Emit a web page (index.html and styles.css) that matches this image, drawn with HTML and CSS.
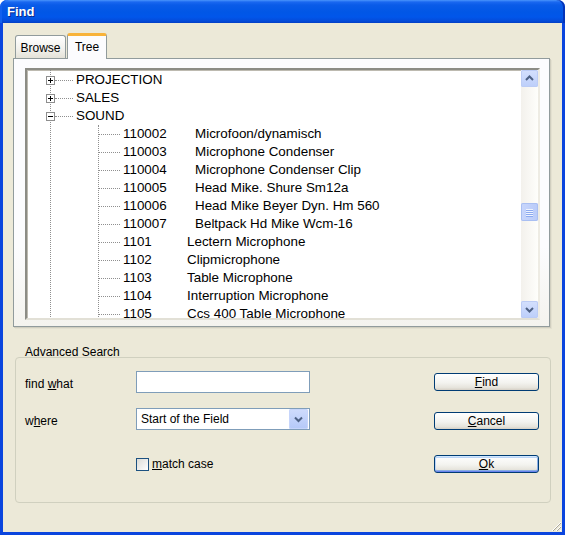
FILE: index.html
```html
<!DOCTYPE html>
<html lang="en">
<head>
    <meta charset="UTF-8">
    <title>Find</title>
    <link rel="stylesheet" href="styles.css">
</head>
<body>
    <div class="window">
        <div class="titlebar">
            <span class="title">Find</span>
        </div>

        <div class="client">
            <div class="tabs">
                <div class="tab">Browse</div>
                <div class="tab active">Tree</div>
            </div>

            <div class="pane">
                <div class="treeview">
                    <div class="tree">
                        <div class="level1">
                            <div class="node">
                                <svg class="toggle" width="9" height="9" viewBox="0 0 9 9"><rect x="0.5" y="0.5" width="8" height="8" fill="#fff" stroke="#8e8e8e"/><path d="M2 4.5h5M4.5 2v5" stroke="#000"/></svg>
                                <span class="hline"></span>
                                <span class="label">PROJECTION</span>
                            </div>
                            <div class="node">
                                <svg class="toggle" width="9" height="9" viewBox="0 0 9 9"><rect x="0.5" y="0.5" width="8" height="8" fill="#fff" stroke="#8e8e8e"/><path d="M2 4.5h5M4.5 2v5" stroke="#000"/></svg>
                                <span class="hline"></span>
                                <span class="label">SALES</span>
                            </div>
                            <div class="node">
                                <svg class="toggle" width="9" height="9" viewBox="0 0 9 9"><rect x="0.5" y="0.5" width="8" height="8" fill="#fff" stroke="#8e8e8e"/><path d="M2 4.5h5" stroke="#000"/></svg>
                                <span class="hline"></span>
                                <span class="label">SOUND</span>
                            </div>

                            <div class="level2">
                                <div class="leaf"><span class="hline long"></span><span class="code wide">110002</span><span>Microfoon/dynamisch</span></div>
                                <div class="leaf"><span class="hline long"></span><span class="code wide">110003</span><span>Microphone Condenser</span></div>
                                <div class="leaf"><span class="hline long"></span><span class="code wide">110004</span><span>Microphone Condenser Clip</span></div>
                                <div class="leaf"><span class="hline long"></span><span class="code wide">110005</span><span>Head Mike. Shure Sm12a</span></div>
                                <div class="leaf"><span class="hline long"></span><span class="code wide">110006</span><span>Head Mike Beyer Dyn. Hm 560</span></div>
                                <div class="leaf"><span class="hline long"></span><span class="code wide">110007</span><span>Beltpack Hd Mike Wcm-16</span></div>
                                <div class="leaf"><span class="hline long"></span><span class="code">1101</span><span>Lectern Microphone</span></div>
                                <div class="leaf"><span class="hline long"></span><span class="code">1102</span><span>Clipmicrophone</span></div>
                                <div class="leaf"><span class="hline long"></span><span class="code">1103</span><span>Table Microphone</span></div>
                                <div class="leaf"><span class="hline long"></span><span class="code">1104</span><span>Interruption Microphone</span></div>
                                <div class="leaf"><span class="hline long"></span><span class="code">1105</span><span>Ccs 400 Table Microphone</span></div>
                            </div>
                        </div>
                    </div>

                    <div class="vscroll">
                        <div class="sbtn">
                            <svg width="17" height="17" viewBox="0 0 17 17"><path d="M5 10l3.5-3.5L12 10" fill="none" stroke="#4d6185" stroke-width="2"/></svg>
                        </div>
                        <div class="track">
                            <div class="thumb">
                                <svg width="17" height="18" viewBox="0 0 17 18"><path d="M5 6.5h7M5 8.5h7M5 10.5h7M5 12.5h7" stroke="#eef3fe"/><path d="M5 7.5h7M5 9.5h7M5 11.5h7M5 13.5h7" stroke="#8caaf0"/></svg>
                            </div>
                        </div>
                        <div class="sbtn">
                            <svg width="17" height="17" viewBox="0 0 17 17"><path d="M5 7l3.5 3.5L12 7" fill="none" stroke="#4d6185" stroke-width="2"/></svg>
                        </div>
                    </div>
                </div>
            </div>

            <div class="group-title">Advanced Search</div>
            <div class="group">
                <div class="form-row first">
                    <label class="field-label">find <u>w</u>hat</label>
                    <div class="textbox"></div>
                    <button class="btn"><u>F</u>ind</button>
                </div>
                <div class="form-row second">
                    <label class="field-label">w<u>h</u>ere</label>
                    <div class="select">
                        <span class="select-text">Start of the Field</span>
                        <span class="dd-btn">
                            <svg width="19" height="20" viewBox="0 0 19 20"><path d="M6 8.5l3.5 3.5L13 8.5" fill="none" stroke="#4d6185" stroke-width="2"/></svg>
                        </span>
                    </div>
                    <button class="btn low"><u>C</u>ancel</button>
                </div>
                <div class="form-row third">
                    <span class="field-label"></span>
                    <div class="check">
                        <span class="checkbox"></span>
                        <span><u>m</u>atch case</span>
                    </div>
                    <button class="btn default"><u>O</u>k</button>
                </div>
            </div>

            <div class="grip-row">
                <svg class="grip" width="12" height="12" viewBox="0 0 12 12">
                    <path d="M11 2L2 11M11 6L6 11M11 10L10 11" stroke="#fff"/>
                    <path d="M11 3L3 11M11 7L7 11" stroke="#aca899"/>
                </svg>
            </div>
        </div>
    </div>
</body>
</html>
```

FILE: styles.css
```css
* {
    margin: 0;
    padding: 0;
    box-sizing: border-box;
}

html, body {
    background: #fff;
}

body {
    font-family: "Liberation Sans", Arial, sans-serif;
    font-size: 12px;
    color: #000;
}

.window {
    width: 565px;
    height: 535px;
    display: flex;
    flex-direction: column;
}

/* title bar */
.titlebar {
    height: 23px;
    border-radius: 7px 7px 0 0;
    background: linear-gradient(to bottom, #4a95fb 0, #1a68f0 2px, #0a5be8 5px, #0157e6 12px, #0156ea 17px, #044bd9 21px, #033fc4 23px);
    box-shadow: inset -2px 0 0 #0434b8, inset 2px 0 0 #1160ee;
    padding: 5px 0 0 7px;
}

.title {
    color: #fff;
    font-weight: bold;
    font-size: 13px;
    line-height: 14px;
    text-shadow: 1px 1px 0 #0a2a8a;
}

/* client area */
.client {
    flex: 1;
    display: flex;
    flex-direction: column;
    background: #ece9d8;
    border: 3px solid #0a45de;
    border-top: 0;
    padding: 10px 0 0 10px;
}

/* tabs */
.tabs {
    display: flex;
    align-items: flex-end;
    height: 25px;
    padding-left: 2px;
}

.tab {
    height: 23px;
    width: 51px;
    margin-right: 1px;
    border: 1px solid #919b9c;
    border-bottom: 0;
    border-radius: 3px 3px 0 0;
    background: linear-gradient(to bottom, #fff, #f2f1ec 60%, #e4e2d8);
    text-align: center;
    padding-top: 5px;
}

.tab.active {
    position: relative;
    z-index: 1;
    height: 26px;
    width: 40px;
    margin-bottom: -1px;
    border-top: 3px solid #f8b33a;
    background: #fcfcfe;
    padding-top: 4px;
}

.pane {
    width: 537px;
    height: 269px;
    border: 1px solid #919b9c;
    background: linear-gradient(to bottom, #fcfcfe 70%, #f4f3ee);
    box-shadow: 1px 1px 0 #d0cebf, 2px 2px 0 #e3e0d0;
    padding: 9px 0 6px 11px;
}

/* tree view */
.treeview {
    width: 515px;
    height: 252px;
    display: flex;
    border: 2px solid;
    border-color: #8c8c85 #eeece4 #e2e0d6 #8c8c85;
    box-shadow: inset 1px 1px 0 #bdbab0;
    background: #fff;
}

.tree {
    flex: 1;
    overflow: hidden;
    font-size: 13.4px;
    line-height: 18px;
}

.level1 {
    margin-left: 23px;
    border-left: 1px dotted #8f8f8f;
    padding-top: 1px;
}

.node, .leaf {
    display: flex;
    align-items: center;
    height: 18px;
    white-space: nowrap;
}

.toggle {
    margin-left: -5px;
    flex-shrink: 0;
}

.hline {
    width: 18px;
    height: 0;
    border-top: 1px dotted #8f8f8f;
    margin-top: 1px;
}

.hline.long {
    width: 21px;
}

.label {
    padding-left: 3px;
}

.level2 {
    margin-left: 47px;
    border-left: 1px dotted #8f8f8f;
}

.code {
    width: 67px;
    padding-left: 3px;
    flex-shrink: 0;
}

.code.wide {
    width: 75px;
}

/* scrollbar */
.vscroll {
    width: 17px;
    display: flex;
    flex-direction: column;
    background: linear-gradient(to right, #f3f1ec, #fefefb);
}

.sbtn {
    height: 17px;
    border-radius: 2px;
    background: linear-gradient(to bottom, #d4e0fd, #bccefa);
    box-shadow: inset 0 0 0 1px #bcccf5;
}

.sbtn svg, .thumb svg, .dd-btn svg {
    display: block;
}

.track {
    flex: 1;
    padding-top: 116px;
}

.thumb {
    height: 18px;
    border-radius: 2px;
    background: linear-gradient(to right, #c8d6fc, #b9cbf9);
    box-shadow: inset 0 0 0 1px #a9bff2;
}

/* advanced search */
.group-title {
    margin: 19px 0 -2px 12px;
    line-height: 13px;
    height: 13px;
}

.group {
    width: 536px;
    height: 146px;
    margin-left: 2px;
    border: 1px solid #d0d0bf;
    border-radius: 4px;
    padding: 13px 11px 0 9px;
}

.form-row {
    display: grid;
    grid-template-columns: 111px 174px 1fr;
    align-items: center;
}

.form-row.first {
    height: 22px;
}

.form-row.second {
    height: 22px;
    margin-top: 15px;
}

.form-row.third {
    height: 18px;
    margin-top: 25px;
}

.field-label {
    padding-top: 4px;
}

.textbox {
    height: 22px;
    border: 1px solid #7f9db9;
    background: #fff;
}

.select {
    height: 22px;
    border: 1px solid #7f9db9;
    background: #fff;
    display: flex;
    align-items: center;
    padding: 0 1px 0 4px;
}

.select-text {
    flex: 1;
}

.dd-btn {
    width: 19px;
    height: 20px;
    border-radius: 2px;
    background: linear-gradient(to bottom, #cfdcfd, #b4c8f8);
    box-shadow: inset 0 0 0 1px #c6d5fb;
}

.check {
    display: flex;
    align-items: center;
    gap: 3px;
}

.checkbox {
    width: 13px;
    height: 13px;
    border: 1px solid #1c5180;
    background: linear-gradient(135deg, #dcdcd7, #fff);
}

.btn {
    justify-self: end;
    width: 105px;
    height: 18px;
    border: 1px solid #003c74;
    border-radius: 3px;
    background: linear-gradient(to bottom, #fff, #f3f3ef 55%, #e6e4dc 85%, #d6d0c5);
    font-family: "Liberation Sans", Arial, sans-serif;
    font-size: 12px;
    line-height: 14px;
    color: #000;
}

.btn.low {
    align-self: end;
}

.btn.default {
    box-shadow: inset 0 1px 0 #cee7ff, inset 0 -1px 0 #6982ee, inset 1px 0 0 #bcd4f6, inset -1px 0 0 #89ade4, inset 0 2px 0 #bcd4f6, inset 0 -2px 0 #89ade4;
}

.grip-row {
    flex: 1;
    display: flex;
    justify-content: flex-end;
    align-items: flex-end;
}

.grip {
    display: block;
}
```
